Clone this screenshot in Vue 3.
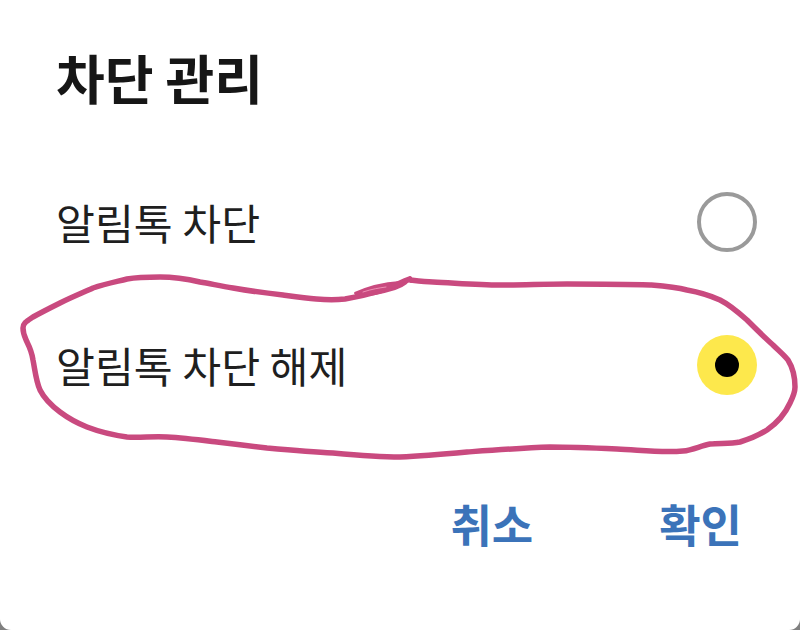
<script setup>
const options = [
  { label: '알림톡 차단', selected: false },
  { label: '알림톡 차단 해제', selected: true }
]
</script>

<template>
  <div class="page">
    <section class="dialog">
      <h1 class="title">차단 관리</h1>
      <div class="options">
        <div v-for="o in options" :key="o.label" class="row">
          <span class="label">{{ o.label }}</span>
          <span class="radio" :class="{ on: o.selected }"></span>
        </div>
      </div>
      <div class="actions">
        <span class="btn">취소</span>
        <span class="btn">확인</span>
      </div>
      <svg class="ink" viewBox="0 0 800 630" width="800" height="630" fill="none">
        <path
          d="M410 279 C400 282 396 286 380 291 C370 294 358 297 345 299 C325 301 305 298 283 295 C265 293 250 291 233 288 C220 286 212 284 200 282 C187 279 175 277 160 277 C148 277 138 277 127 279 C115 282 105 284 93 288 C82 293 72 297 60 303 C50 308 42 312 33 317 C27 321 23 323 23 328 C23 334 25 337 27 342 C30 348 32 353 33 360 C35 370 36 381 40 390 C45 400 52 406 60 412 C68 418 77 423 87 427 C100 432 113 435 127 437 C140 438 153 436 167 437 C184 438 200 440 217 442 C234 444 250 446 267 448 C289 450 311 452 333 453 C355 455 378 457 400 457 C422 456 445 454 467 452 C495 450 522 448 550 447 C572 447 595 448 617 449 C640 450 662 453 683 451 C693 450 700 446 710 444 C720 443 730 444 740 442 C750 439 759 435 767 430 C777 423 785 414 790 403 C793 397 795 393 795 387 C795 377 793 368 788 360 C783 354 778 350 773 345 C764 337 756 329 747 320 C738 312 730 305 720 300 C709 295 698 292 687 290 C675 287 662 286 650 285 C622 284 595 284 567 284 C545 284 522 285 500 285 C478 285 455 283 433 282 C425 282 418 281 410 280"
          stroke="#c94a7f" stroke-width="5.5" stroke-linecap="round" stroke-linejoin="round"
        />
        <path
          d="M355 293 C368 287 385 283 400 282 C404 282 407 281 410 277 C410 281 404 286 395 289 C382 293 368 296 357 296 Z"
          fill="#c94a7f" stroke="#c94a7f" stroke-width="2" stroke-linejoin="round"
        />
        <path d="M363 292 C372 289 379 288 386 287" stroke="#ee8fb4" stroke-width="1" stroke-linecap="round" />
      </svg>
    </section>
  </div>
</template>

<style scoped>
.page {
  width: 800px;
  height: 630px;
  background: #808080;
  overflow: hidden;
}
.dialog {
  position: relative;
  box-sizing: border-box;
  width: 800px;
  height: 630px;
  padding: 39px 43px 0 56px;
  background: #fff;
  border-radius: 0 0 11px 11px;
  display: flex;
  flex-direction: column;
  font-family: "Noto Sans CJK KR", "Noto Sans", sans-serif;
}
.title {
  margin: 0;
  font-size: 53px;
  line-height: 76px;
  font-weight: 700;
  color: #161616;
}
.options {
  margin-top: 77px;
  display: flex;
  flex-direction: column;
  gap: 83px;
}
.row {
  height: 60px;
  display: flex;
  align-items: center;
  justify-content: space-between;
}
.label {
  font-size: 42.3px;
  line-height: 60px;
  color: #1f1f1f;
}
.radio {
  box-sizing: border-box;
  width: 60px;
  height: 60px;
  border-radius: 50%;
  border: 4px solid #9a9a9a;
  background: #fff;
  display: flex;
  align-items: center;
  justify-content: center;
}
.radio.on {
  border: none;
  background: #fde84c;
}
.radio.on::after {
  content: "";
  width: 24px;
  height: 24px;
  border-radius: 50%;
  background: #000;
}
.actions {
  margin-top: 97px;
  display: flex;
  justify-content: flex-end;
  gap: 126px;
  padding-right: 15px;
}
.btn {
  font-size: 45px;
  line-height: 64px;
  font-weight: 700;
  color: #3b73b9;
}
.ink {
  position: absolute;
  left: 0;
  top: 0;
  pointer-events: none;
}
</style>
